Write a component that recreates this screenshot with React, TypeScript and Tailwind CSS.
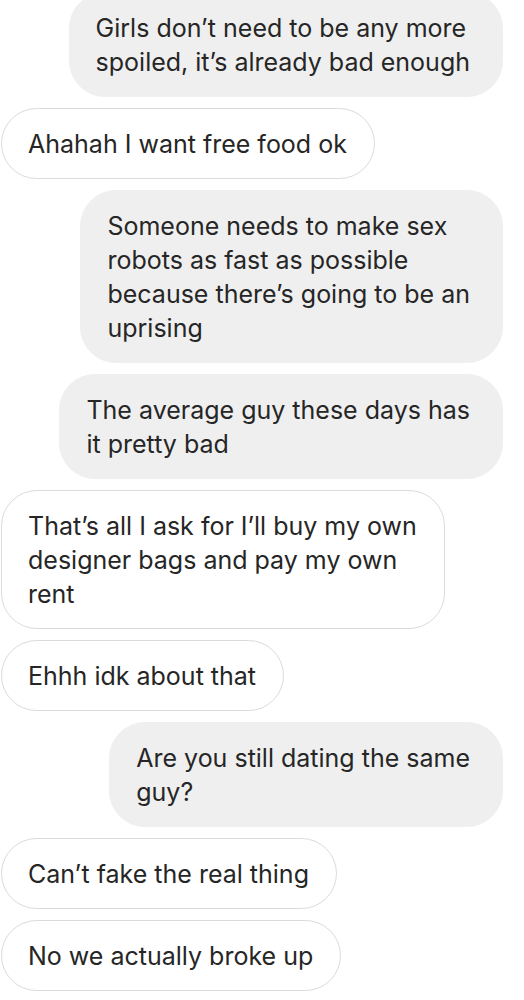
const messages = [
  { me: true, lines: ["Girls don’t need to be any more", "spoiled, it’s already bad enough"] },
  { me: false, lines: ["Ahahah I want free food ok"] },
  {
    me: true,
    lines: ["Someone needs to make sex", "robots as fast as possible", "because there’s going to be an", "uprising"],
  },
  { me: true, lines: ["The average guy these days has", "it pretty bad"] },
  { me: false, lines: ["That’s all I ask for I’ll buy my own", "designer bags and pay my own", "rent"] },
  { me: false, lines: ["Ehhh idk about that"] },
  { me: true, lines: ["Are you still dating the same", "guy?"] },
  { me: false, lines: ["Can’t fake the real thing"] },
  { me: false, lines: ["No we actually broke up"] },
];

export default function App() {
  return (
    <div
      className="w-[524px] h-[1000px] overflow-hidden bg-white text-[#262626]"
      style={{ fontFamily: "Inter, 'Liberation Sans', sans-serif" }}
    >
      <div className="flex flex-col gap-[11px] mt-[-8px] pl-px pr-[21px]">
        {messages.map((m, i) => (
          <div key={i} className={m.me ? "flex justify-end" : "flex justify-start"}>
            <div
              className={
                m.me
                  ? "rounded-[36px] border border-[#efefef] bg-[#efefef] pl-[26px] pr-[32px] py-[17.5px] text-[25px] leading-[34px]"
                  : "rounded-[36px] border border-[#dbdbdb] bg-white pl-[26px] pr-[27px] py-[17.5px] text-[25px] leading-[34px]"
              }
            >
              {m.lines.map((l, j) => (
                <div key={j} className="whitespace-nowrap">
                  {l}
                </div>
              ))}
            </div>
          </div>
        ))}
      </div>
    </div>
  );
}
